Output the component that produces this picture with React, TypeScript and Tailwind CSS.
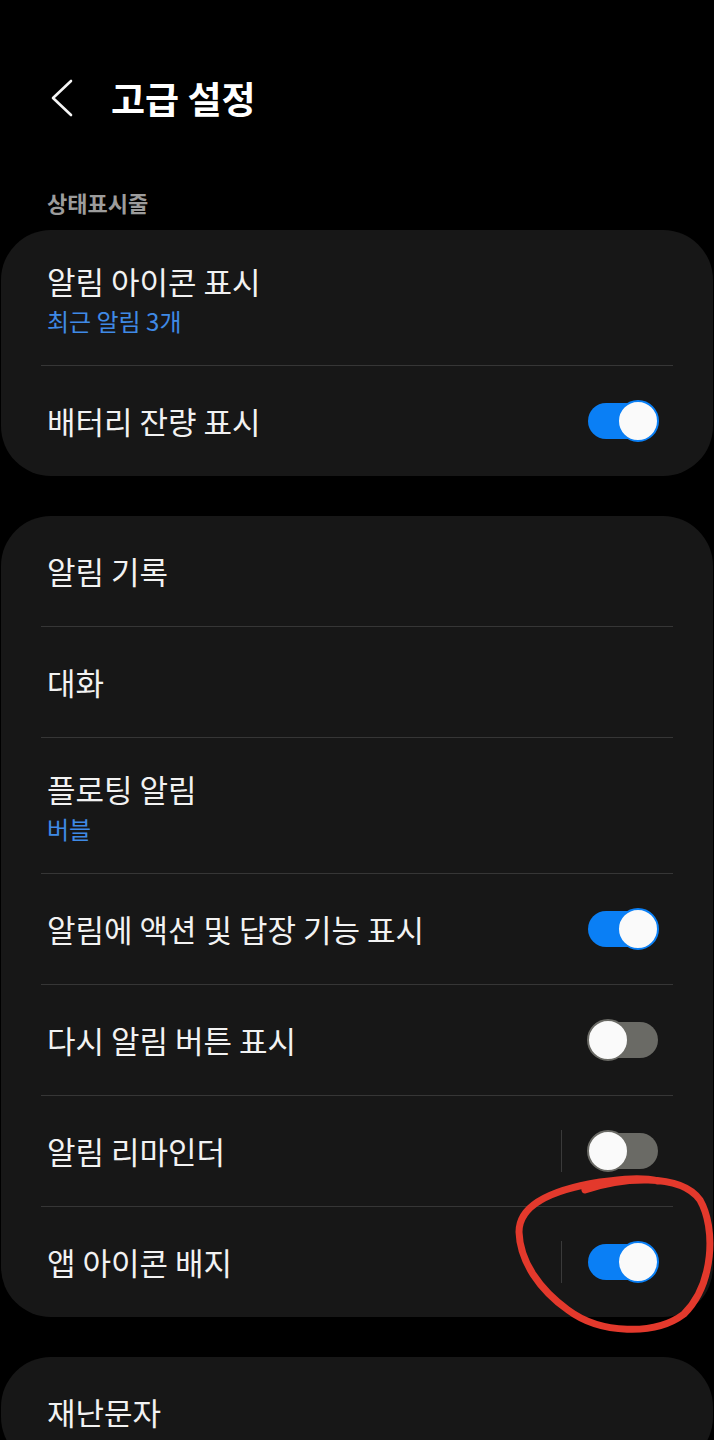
import React from "react";

const font = { fontFamily: '"Noto Sans CJK KR", "Noto Sans", sans-serif' };

function Toggle({ on }: { on: boolean }) {
  return (
    <div className="relative w-[72px] h-[42px] shrink-0">
      <div
        className={
          "absolute left-[1px] right-[1px] top-[3px] h-[36px] rounded-full " +
          (on ? "bg-[#0a7ff5]" : "bg-[#6a6a65]")
        }
      />
      <div
        className={
          "absolute top-0 w-[42px] h-[42px] rounded-full bg-[#fafafa] border-2 " +
          (on ? "right-0 border-[#0a7ff5]" : "left-0 border-[#6a6a65]")
        }
      />
    </div>
  );
}

function Divider() {
  return <div className="mx-[40px] h-px bg-[#363636]" />;
}

function Row({
  title,
  sub,
  toggle,
  sep,
  tall,
}: {
  title: string;
  sub?: string;
  toggle?: boolean;
  sep?: boolean;
  tall?: boolean;
}) {
  return (
    <div
      className={
        "flex items-center justify-between pl-[46px] pr-[54px] " +
        (tall ? "h-[135px] pt-[5px]" : "h-[110px]")
      }
    >
      <div className="flex flex-col">
        <div className="text-[31px] leading-[42px] text-[#f2f2f2]">{title}</div>
        {sub && <div className="text-[24px] leading-[38px] text-[#3f8ae6]">{sub}</div>}
      </div>
      {toggle !== undefined && (
        <div className="flex items-center">
          {sep && <div className="w-px h-[42px] bg-[#3a3a3a] mr-[25px]" />}
          <Toggle on={toggle} />
        </div>
      )}
    </div>
  );
}

export default function App() {
  return (
    <div className="relative w-[714px] min-h-[1440px] bg-black overflow-hidden" style={font}>
      <div className="pt-[58px] h-[138px] flex items-center pl-[50px]">
        <svg width="26" height="40" viewBox="0 0 26 40" className="shrink-0">
          <polyline
            points="21,3 3,20 21,37"
            fill="none"
            stroke="#f5f5f5"
            strokeWidth="2.6"
            strokeLinecap="round"
            strokeLinejoin="round"
          />
        </svg>
        <div className="ml-[35px] text-[37px] leading-[44px] font-bold text-white">
          고급 설정
        </div>
      </div>
      <div className="mt-[50px] pl-[47px] text-[22px] leading-[28px] font-bold text-[#9c9c9c]">
        상태표시줄
      </div>
      <div className="mt-[14px] mx-px rounded-[50px] bg-[#171717]">
        <Row title="알림 아이콘 표시" sub="최근 알림 3개" tall />
        <Divider />
        <Row title="배터리 잔량 표시" toggle={true} />
      </div>
      <div className="mt-[40px] mx-px rounded-[50px] bg-[#171717]">
        <Row title="알림 기록" />
        <Divider />
        <Row title="대화" />
        <Divider />
        <Row title="플로팅 알림" sub="버블" tall />
        <Divider />
        <Row title="알림에 액션 및 답장 기능 표시" toggle={true} />
        <Divider />
        <Row title="다시 알림 버튼 표시" toggle={false} />
        <Divider />
        <Row title="알림 리마인더" toggle={false} sep />
        <Divider />
        <Row title="앱 아이콘 배지" toggle={true} sep />
      </div>
      <div className="mt-[40px] mx-px rounded-[50px] bg-[#171717]">
        <Row title="재난문자" />
      </div>
      <svg
        className="absolute left-0 top-0 pointer-events-none"
        width="714"
        height="1440"
        viewBox="0 0 714 1440"
      >
        <path
          d="M 585 1190 C 620 1178, 680 1172, 700 1200 C 716 1228, 714 1284, 684 1314 C 655 1336, 600 1334, 568 1310 C 540 1290, 520 1262, 519 1232 C 519 1205, 550 1190, 600 1182 C 622 1179, 642 1177, 658 1181"
          fill="none"
          stroke="#e3392c"
          strokeWidth="7"
          strokeLinecap="round"
        />
      </svg>
    </div>
  );
}
